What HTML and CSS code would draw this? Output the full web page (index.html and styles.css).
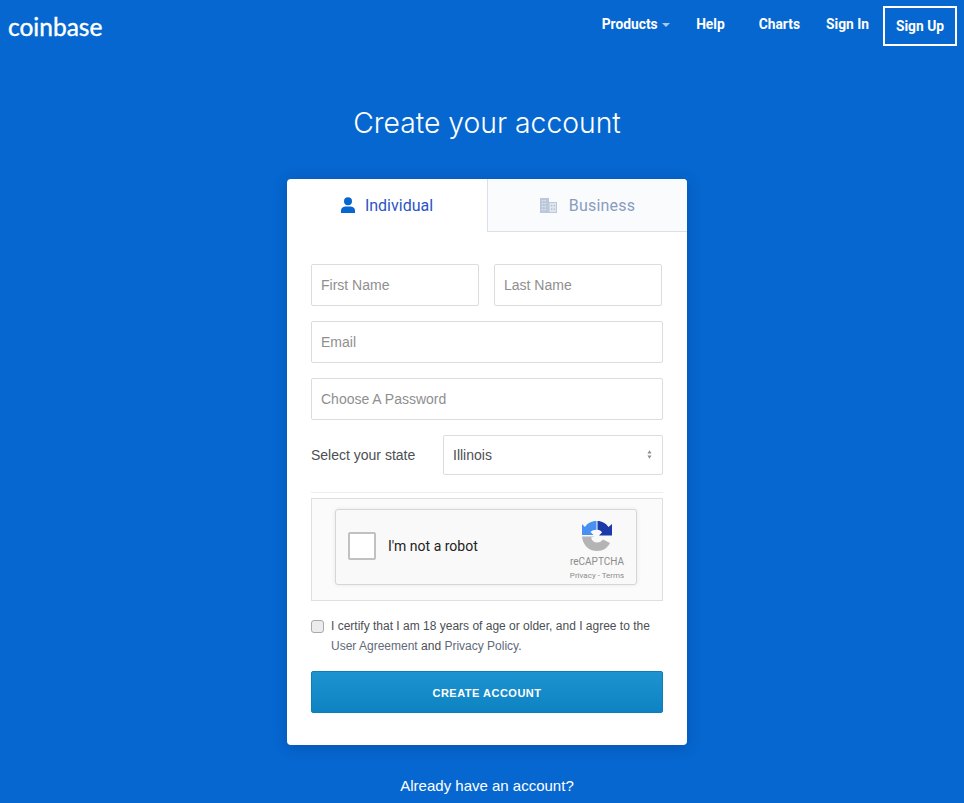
FILE: index.html
```html
<!DOCTYPE html>
<html lang="en">
<head>
<meta charset="utf-8">
<title>Coinbase - Create your account</title>
<link rel="stylesheet" href="styles.css">
</head>
<body>
<header class="topbar">
  <a class="logo">coinbase</a>
  <nav class="nav">
    <a class="nav-link nav-products">Products <span class="caret"></span></a>
    <a class="nav-link nav-help">Help</a>
    <a class="nav-link nav-charts">Charts</a>
    <a class="nav-link nav-signin">Sign In</a>
    <a class="nav-signup">Sign Up</a>
  </nav>
</header>
<main class="main">
  <h1 class="title">Create your account</h1>
  <section class="card">
    <div class="tabs">
      <div class="tab tab-active">
        <svg class="tab-icon" viewBox="0 0 14 16" width="14" height="16"><circle cx="7" cy="4.200" r="4" fill="#0667d0"/><path d="M0 16v-2.200C0 10.800 2.600 9.500 5 9.500h4c2.400 0 5 1.300 5 4.300V16z" fill="#0667d0"/></svg>
        <span>Individual</span>
      </div>
      <div class="tab tab-off">
        <svg class="tab-icon" viewBox="0 0 17 15" width="17" height="15"><path d="M0 0h9v4h8v11H0z" fill="#bcc8da"/><path d="M2 2h1.200v1.200H2zM4.500 2h1.200v1.200H4.500zM2 5h1.200v1.200H2zM4.500 5h1.200v1.200H4.500zM2 8h1.200v1.200H2zM4.500 8h1.200v1.200H4.500zM2 11h1.200v1.200H2zM4.500 11h1.200v1.200H4.500z" fill="#e6ebf2"/><path d="M9.500 5h6.500v9H9.500z" fill="#dfe5ee"/><path d="M11 7h1.300v1.300H11zM13.700 7H15v1.300h-1.300zM11 10.500h1.300v1.300H11zM13.700 10.500H15v1.300h-1.300z" fill="#a9b8ce"/></svg>
        <span>Business</span>
      </div>
    </div>
    <form class="form">
      <div class="row-two">
        <input class="field" type="text" placeholder="First Name">
        <input class="field" type="text" placeholder="Last Name">
      </div>
      <input class="field field-full" type="text" placeholder="Email">
      <input class="field field-full" type="text" placeholder="Choose A Password">
      <div class="state-row">
        <label class="state-label">Select your state</label>
        <div class="select">
          <span>Illinois</span>
          <svg class="select-arrows" viewBox="0 0 6 10" width="5" height="9"><path d="M3 0l2.500 3.800h-5zM3 10L.5 6.200h5z" fill="#8a8f98"/></svg>
        </div>
      </div>
      <div class="captcha-wrap">
        <div class="captcha">
          <span class="captcha-box"></span>
          <span class="captcha-text">I'm not a robot</span>
          <div class="captcha-brand">
            <svg class="captcha-logo" viewBox="0 0 30 30" width="30" height="30">
              <path d="M14.500 0C9 0 5.200 2.500 3 6L0 3v11h11.500L8.500 11C10 9.500 12 8.800 14.500 8.800z" fill="#4a90f0"/>
              <path d="M15.500 0v8.800c2 0 3.500 1 4.500 2.700l-3 3H30V3l-3.500 3C24 2.500 20 0 15.500 0z" fill="#1c3aa9"/>
              <path d="M0 15.500C.5 24 7 30 15 30c6 0 10.500-3 13-8l-7-3.500c-1.500 2-3.500 3-6 3-3 0-5-1.500-6-5l3.500-1z" fill="#b4b4b4"/>
            </svg>
            <span class="captcha-name">reCAPTCHA</span>
            <span class="captcha-links">Privacy - Terms</span>
          </div>
        </div>
      </div>
      <label class="agree">
        <span class="agree-check"></span>
        <span class="agree-text">I certify that I am 18 years of age or older, and I agree to the <a>User Agreement</a> and <a>Privacy Policy</a>.</span>
      </label>
      <button class="submit" type="button">CREATE ACCOUNT</button>
    </form>
  </section>
  <p class="already">Already have an account?</p>
</main>
</body>
</html>
```
FILE: styles.css
```css
* { box-sizing: border-box; }
html, body { margin: 0; height: 100%; }
body {
  background: #0667d0;
  font-family: "Liberation Sans", Arial, sans-serif;
  color: #fff;
  overflow: hidden;
}
.topbar {
  display: flex;
  justify-content: space-between;
  align-items: flex-start;
  height: 52px;
  padding: 6px 7px 0 8px;
}
.logo {
  font-family: Lato, sans-serif;
  font-size: 24.500px;
  line-height: 42px;
  color: #fff;
  -webkit-text-stroke: 0.4px #fff;
}
.nav { display: flex; align-items: flex-start; }
.nav-link {
  font-family: Roboto, sans-serif;
  font-weight: 700;
  font-size: 13.800px;
  line-height: 36px;
  color: #fff;
  white-space: nowrap;
}
.nav-products { margin-right: 26px; }
.nav-help { margin-right: 34px; }
.nav-charts { margin-right: 26px; }
.nav-signin { margin-right: 14px; }
.caret {
  display: inline-block;
  vertical-align: middle;
  margin-left: 1px;
  border-left: 4px solid transparent;
  border-right: 4px solid transparent;
  border-top: 4px solid #a9c8ee;
}
.nav-signup {
  font-family: Roboto, sans-serif;
  font-weight: 700;
  font-size: 13.800px;
  line-height: 36px;
  height: 40px;
  width: 74px;
  text-align: center;
  border: 2px solid #fff;
  color: #fff;
}
.main {
  display: flex;
  flex-direction: column;
  align-items: center;
  padding-left: 10px;
}
.title {
  margin: 0;
  padding-top: 51px;
  height: 127px;
  font-family: Inter, sans-serif;
  font-weight: 300;
  font-size: 28.300px;
  line-height: 40px;
  color: #fff;
}
.card {
  width: 400px;
  height: 566px;
  background: #fff;
  border-radius: 4px;
  box-shadow: 0 2px 14px rgba(0, 40, 100, 0.3);
  overflow: hidden;
}
.tabs { display: flex; height: 53px; }
.tab {
  flex: 1;
  display: flex;
  align-items: center;
  justify-content: center;
  gap: 10px;
  font-family: Roboto, sans-serif;
  font-size: 16px;
  padding-bottom: 1px;
}
.tab-active { color: #2b55c4; width: 200px; flex: none; }
.tab-off {
  gap: 12px;
  padding-bottom: 0;
  letter-spacing: 0.2px;
  color: #8a9bbd;
  background: #f9fbfd;
  border-left: 1px solid #dae1e9;
  border-bottom: 1px solid #dae1e9;
}
.tab-icon { display: block; flex: none; }
.form { display: flex; flex-direction: column; padding: 32px 24px 0; }
.row-two { display: flex; gap: 15px; margin-bottom: 15px; padding-right: 1px; }
.row-two .field { width: 168px; }
.field {
  display: block;
  height: 42px;
  padding: 0 9px;
  border: 1px solid #dcdcdc;
  border-radius: 2px;
  background: #fff;
  font-family: "Liberation Sans", Arial, sans-serif;
  font-size: 14px;
  color: #444;
  outline: none;
}
.field::placeholder { color: #8f8f8f; opacity: 1; }
.field-full { width: 352px; margin-bottom: 15px; }
.state-row {
  display: flex;
  align-items: center;
  justify-content: space-between;
  height: 58px;
  padding-bottom: 18px;
  border-bottom: 1px solid #eceef0;
}
.state-label { font-size: 14px; color: #4c4f54; }
.select {
  display: flex;
  align-items: center;
  justify-content: space-between;
  width: 220px;
  height: 40px;
  padding: 0 10px 0 9px;
  border: 1px solid #dcdcdc;
  border-radius: 2px;
  font-size: 14px;
  color: #4c4f54;
}
.select-arrows { display: block; }
.captcha-wrap {
  display: flex;
  justify-content: center;
  margin-top: 5px;
  height: 103px;
  padding: 10px 2px 0 0;
  background: #fbfbfb;
  border: 1px solid #dfdfdf;
}
.captcha {
  display: flex;
  align-items: center;
  width: 302px;
  height: 76px;
  padding: 0 0 3px 12px;
  background: #f9f9f9;
  border: 1px solid #d6d6d6;
  border-radius: 3px;
  box-shadow: 0 0 4px rgba(0, 0, 0, 0.08);
  font-family: Roboto, sans-serif;
}
.captcha-box {
  flex: none;
  width: 28px;
  height: 28px;
  background: #fff;
  border: 2px solid #c1c1c1;
  border-radius: 2px;
}
.captcha-text {
  flex: 1;
  margin-left: 12px;
  font-size: 14px;
  color: #222;
}
.captcha-brand {
  align-self: flex-start;
  display: flex;
  flex-direction: column;
  align-items: center;
  width: 54px;
  margin-right: 12px;
  padding-top: 11px;
}
.captcha-logo { display: block; }
.captcha-name { margin-top: 5px; font-size: 10px; line-height: 12px; color: #8c8c8c; }
.captcha-links { margin-top: 2px; font-size: 8px; line-height: 12px; color: #8c8c8c; white-space: nowrap; }
.agree {
  display: flex;
  gap: 7px;
  margin-top: 15px;
  height: 55px;
}
.agree-check {
  flex: none;
  width: 13px;
  height: 13px;
  margin-top: 4px;
  background: #ececec;
  border: 1px solid #a9a9a9;
  border-radius: 3px;
}
.agree-text { font-size: 12px; line-height: 20px; color: #4c4f54; }
.agree-text a { color: #5f6a7a; }
.submit {
  display: block;
  width: 352px;
  height: 42px;
  padding-top: 2px;
  border: 1px solid #0f7db9;
  border-radius: 2px;
  background: linear-gradient(#1d93d0, #0d83c2);
  color: #fff;
  font-family: "Liberation Sans", Arial, sans-serif;
  font-weight: 700;
  font-size: 11px;
  letter-spacing: 0.5px;
}
.already {
  margin: 31px 0 0;
  font-size: 15px;
  line-height: 20px;
  color: #fff;
}
```
